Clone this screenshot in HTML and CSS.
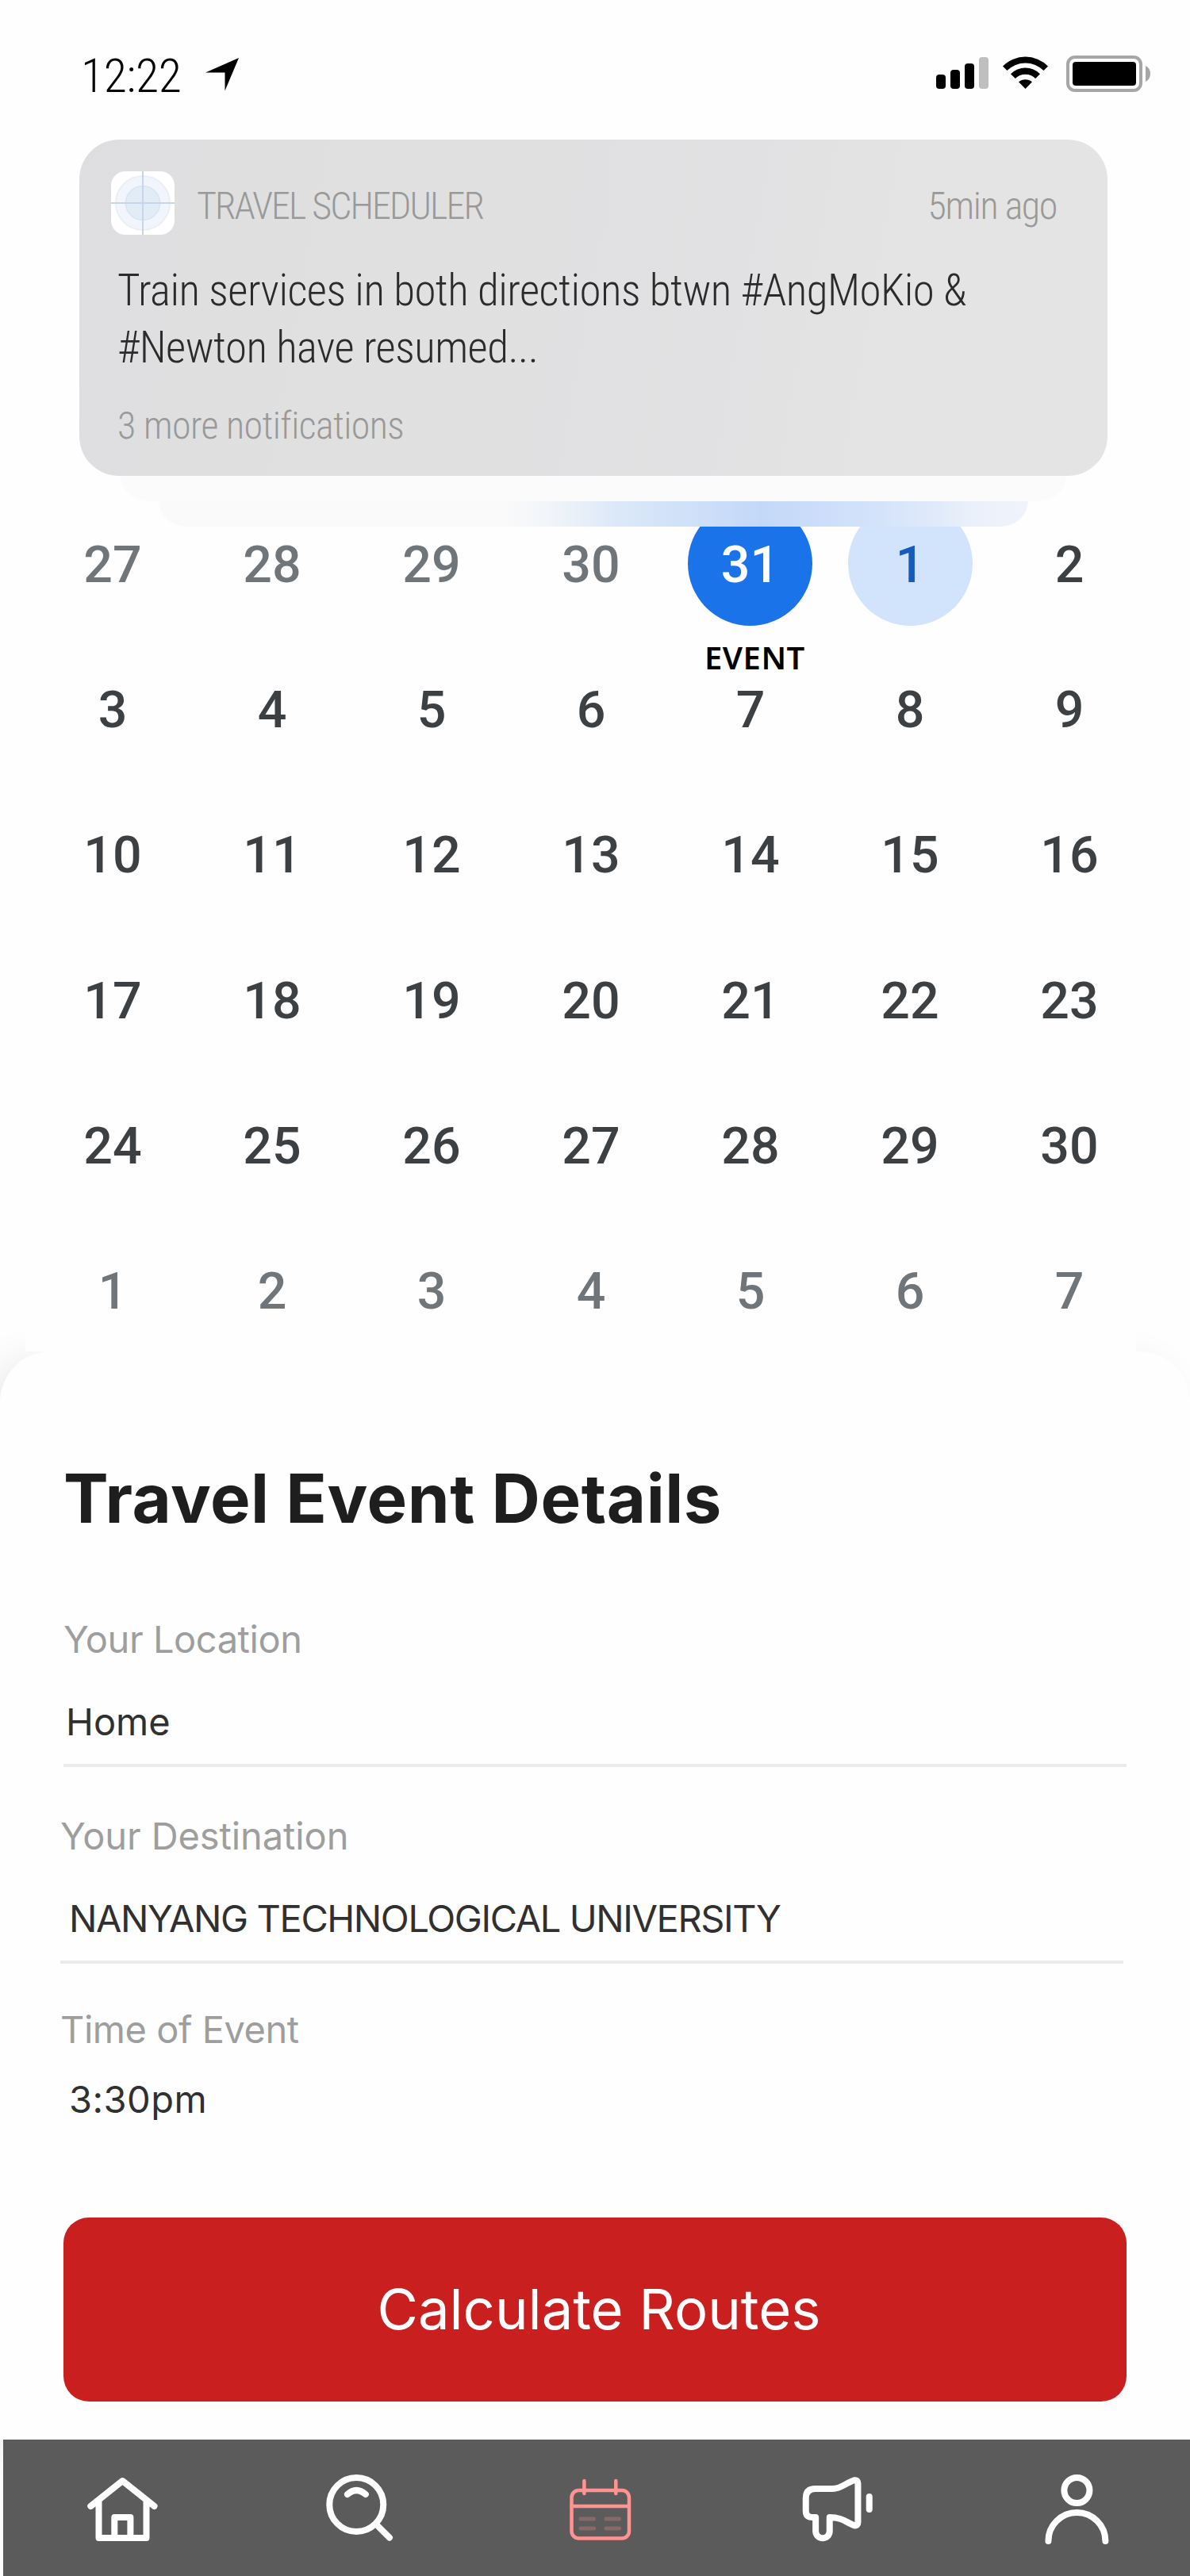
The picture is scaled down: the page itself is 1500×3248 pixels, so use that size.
FILE: index.html
```html
<!DOCTYPE html>
<html lang="en">
<head>
<meta charset="utf-8">
<title>Travel Scheduler</title>
<link rel="stylesheet" href="styles.css">
</head>
<body>
<div class="screen">
  <header class="status">
    <span class="status-time">12:22</span>
    <svg class="status-arrow" width="42" height="44" viewBox="0 0 42 44"><path d="M0 19.500L42 1 24.500 42.500V19.500z" fill="#000"/></svg>
    <svg class="status-icons" width="272" height="48" viewBox="0 0 272 48">
      <rect x="0" y="25" width="12" height="18" rx="4"/>
      <rect x="18" y="19" width="12" height="24" rx="4"/>
      <rect x="36" y="11" width="12" height="32" rx="4"/>
      <rect x="54" y="3" width="12" height="40" rx="4" fill="#bfbfbf"/>
      <path d="M84 14.500a40 40 0 0 1 57 0l-5.500 5.500a32.500 32.500 0 0 0-46 0z"/>
      <path d="M94 24.300a26 26 0 0 1 37 0l-5.800 5.700a18 18 0 0 0-25.400 0z"/>
      <path d="M104 34.300a13 13 0 0 1 17 0L112.500 43z"/>
      <rect x="166" y="3" width="92" height="42" rx="9" fill="none" stroke="#a6a6a6" stroke-width="4"/>
      <rect x="172" y="9" width="80" height="30" rx="4"/>
      <path d="M264 14q6 3 6 10t-6 10z" fill="#a6a6a6"/>
    </svg>
  </header>

  <section class="notices">
    <article class="notice">
      <div class="notice-head">
        <svg class="app-icon" width="80" height="80" viewBox="0 0 80 80">
          <rect width="80" height="80" rx="18" fill="#fff"/>
          <circle cx="40" cy="40" r="34" fill="#f2f6fc" stroke="#e9eff8" stroke-width="2"/>
          <circle cx="40" cy="40" r="21.500" fill="#e2ecf6" stroke="#d8e4f1" stroke-width="1.500"/>
          <path d="M40 0V80M0 40H80" stroke="#c5d6ea" stroke-width="2"/>
        </svg>
        <span class="app-name">TRAVEL SCHEDULER</span>
        <span class="ago">5min ago</span>
      </div>
      <p class="message">Train services in both directions btwn #AngMoKio &amp;<br>#Newton have resumed...</p>
      <p class="more">3 more notifications</p>
    </article>
    <div class="layer layer-mid"></div>
    <div class="layer layer-back"></div>
  </section>

  <section class="calendar">
    <span class="day out">27</span><span class="day out">28</span><span class="day out">29</span><span class="day out">30</span><span class="day today"><b>31</b><em>EVENT</em></span><span class="day picked"><b>1</b></span><span class="day">2</span>
    <span class="day">3</span><span class="day">4</span><span class="day">5</span><span class="day">6</span><span class="day">7</span><span class="day">8</span><span class="day">9</span>
    <span class="day">10</span><span class="day">11</span><span class="day">12</span><span class="day">13</span><span class="day">14</span><span class="day">15</span><span class="day">16</span>
    <span class="day">17</span><span class="day">18</span><span class="day">19</span><span class="day">20</span><span class="day">21</span><span class="day">22</span><span class="day">23</span>
    <span class="day">24</span><span class="day">25</span><span class="day">26</span><span class="day">27</span><span class="day">28</span><span class="day">29</span><span class="day">30</span>
    <span class="day out">1</span><span class="day out">2</span><span class="day out">3</span><span class="day out">4</span><span class="day out">5</span><span class="day out">6</span><span class="day out">7</span>
  </section>

  <main class="sheet">
    <h1>Travel Event Details</h1>
    <div class="field">
      <label class="tight">Your Location</label>
      <div class="value">Home</div>
    </div>
    <div class="field shifted">
      <label>Your Destination</label>
      <div class="value uni">NANYANG TECHNOLOGICAL UNIVERSITY</div>
    </div>
    <div class="field time">
      <label class="tight">Time of Event</label>
      <div class="value">3:30pm</div>
    </div>
    <button class="cta">Calculate Routes</button>
  </main>

  <nav class="tabs">
    <svg width="100" height="100" viewBox="104 3114 100 100" class="tab">
      <path d="M114.300 3160L154.400 3128 194.500 3160M124.500 3152V3200H184.500V3152M144.300 3199V3174H164.400V3199"/>
    </svg>
    <svg width="100" height="100" viewBox="404.750 3114 100 100" class="tab">
      <circle cx="449" cy="3158" r="34"/>
      <path d="M474 3183L490.700 3199.700M437.700 3145Q449 3135 460.600 3145"/>
    </svg>
    <svg width="100" height="100" viewBox="705.500 3114 100 100" class="tab active">
      <rect x="720" y="3140" width="72.500" height="60.500" rx="9"/>
      <path d="M720 3160H792.500M735.900 3128V3144M775.800 3128V3144"/>
      <path class="dash" d="M731.500 3176H748M763.500 3176H780M731.500 3188H748M763.500 3188H780"/>
    </svg>
    <svg width="100" height="100" viewBox="1006.250 3114 100 100" class="tab">
      <path d="M1028 3138H1050C1060 3138 1066 3131 1077 3127.300Q1081.700 3126.500 1081.700 3131V3180.500Q1081.700 3185 1077 3184.300C1067 3180.500 1062 3174 1046 3174V3191.500A8.800 8.800 0 0 1 1028.400 3191.500V3174H1024Q1016 3174 1016 3166V3150Q1016 3138 1028 3138zM1096 3148V3164"/>
    </svg>
    <svg width="100" height="100" viewBox="1307 3114 100 100" class="tab">
      <circle cx="1357.400" cy="3140" r="16"/>
      <path d="M1321.400 3204A36 36 0 0 1 1393.400 3204"/>
    </svg>
  </nav>
</div>
</body>
</html>
```
FILE: styles.css
```css
* { box-sizing: border-box; }
body { margin: 0; background: #fefefe; }
p, h1 { margin: 0; }

.screen {
  width: 1500px;
  height: 3248px;
  overflow: hidden;
  display: flex;
  flex-direction: column;
  font-family: Inter, sans-serif;
}

/* status bar */
.status {
  flex: none;
  display: flex;
  align-items: flex-start;
  height: 176px;
  padding: 69px 48px 0 102px;
  font-family: "Roboto Condensed", Roboto, sans-serif;
}
.status-time {
  width: 157px;
  font-size: 60px;
  font-weight: 300;
  line-height: 54px;
  letter-spacing: -0.500px;
}
.status-arrow { margin-top: 3px; }
.status-icons { margin-left: auto; }

/* notification stack */
.notices {
  flex: none;
  position: relative;
  z-index: 2;
  display: flex;
  flex-direction: column;
  align-items: center;
  width: 1296px;
  margin-left: 100px;
  font-family: "Roboto Condensed", Roboto, sans-serif;
  font-weight: 300;
}
.notice {
  width: 1296px;
  height: 424px;
  padding: 40px 64px 0 40px;
  border-radius: 50px;
  background: linear-gradient(100deg, #dedee0 0%, #e0e0e0 25%, #e1e1e3 60%, #e4e4e4 80%);
  color: #2b2b2b;
}
.notice-head {
  display: flex;
  align-items: center;
  height: 80px;
  padding-top: 7px;
  font-size: 48px;
  line-height: 80px;
  color: #999;
}
.app-icon { margin-top: -7px; }
.app-name { margin-left: 28px; letter-spacing: -1.900px; }
.ago { margin-left: auto; letter-spacing: -1.400px; }
.message {
  margin: 35px 0 0 8px;
  font-size: 55px;
  line-height: 71.500px;
  letter-spacing: -0.550px;
  white-space: nowrap;
}
.more {
  margin: 39px 0 0 8px;
  font-size: 48px;
  line-height: 48px;
  letter-spacing: -0.600px;
  color: #999;
}
.layer { height: 32px; border-radius: 0 0 36px 36px / 0 0 32px 32px; }
.layer-mid { width: 1192px; background: #fbfbfb; }
.layer-back {
  width: 1096px;
  background: linear-gradient(90deg, #fafafa 0, #fafafa 430px, #f2f5f9 490px, #dbe8f8 580px, #c3d8f8 760px, #d1e1fa 880px, #e0eafa 980px, #eaf0fa 1020px, #f0f3fb 100%);
}

/* month grid */
.calendar {
  flex: none;
  position: relative;
  z-index: 1;
  display: grid;
  grid-template-columns: repeat(7, 201px);
  grid-auto-rows: 183.200px;
  width: 1400px;
  height: 1085px;
  margin: -45px 0 0 32px;
  padding-left: 9px;
  background: #fefefe;
  font-family: Roboto, sans-serif;
  font-size: 64.500px;
  font-weight: 500;
  color: #3c4043;
}
.day {
  position: relative;
  display: flex;
  align-items: center;
  justify-content: center;
  padding: 3px 0 0 1px;
}
.day b {
  display: flex;
  align-items: center;
  justify-content: center;
  width: 157px;
  height: 157px;
  margin-top: -3px;
  padding-top: 3px;
  border-radius: 50%;
  font-weight: 500;
}
.out { color: #70757a; }
.today { padding-left: 0; }
.today b { background: #1a73e8; color: #fff; }
.picked b { background: #d2e3fc; color: #185abc; }
.day em {
  position: absolute;
  left: 43px;
  top: 185px;
  font: 600 40px/50px "Noto Sans", sans-serif;
  letter-spacing: 0.500px;
  color: #000;
}

/* event form */
.sheet {
  flex: none;
  height: 1372px;
  padding: 141px 80px 0;
  border-radius: 64px 64px 0 0;
  background: #fefefe;
  box-shadow: -20px 10px 50px rgba(0, 0, 0, 0.08);
}
h1 {
  font-size: 85px;
  font-weight: 700;
  line-height: 90px;
  letter-spacing: 0.550px;
  color: #1e1e1e;
}
.field {
  height: 248px;
  border-bottom: 4px solid #eaeaea;
  font-size: 47px;
  line-height: 56px;
}
h1 + .field { margin-top: 45px; }
.shifted { margin-left: -4px; margin-right: 4px; }
.time { height: 244px; margin-left: -4px; border: 0; }
label { display: block; height: 124px; padding-top: 59px; letter-spacing: -0.100px; color: #9e9e9e; }
.tight { letter-spacing: -0.450px; }
.value { padding: 39px 0 0 3px; color: #303030; }
.uni { padding-left: 11px; letter-spacing: -1.400px; }
.time label { padding-top: 55px; }
.time .value { padding: 19px 0 0 11px; letter-spacing: 0.500px; }
.cta {
  display: block;
  width: 1340px;
  height: 232px;
  margin-top: 76px;
  padding: 0 0 0 10px;
  border: 0;
  border-radius: 32px;
  background: #ca1f1f;
  color: #fff;
  font: 400 70.500px/232px Inter, sans-serif;
}

/* tab bar */
.tabs {
  position: relative;
  z-index: 1;
  flex: none;
  display: flex;
  justify-content: space-between;
  height: 172px;
  margin-left: 4px;
  padding: 38px 93px 0 100px;
  background: #5b5b5b;
}
.tab {
  fill: none;
  stroke: #fff;
  stroke-width: 8;
  stroke-linecap: round;
  stroke-linejoin: round;
}
.active { stroke: #ff9292; stroke-width: 4.500; }
.dash { stroke: #866969; stroke-width: 5; }
```
